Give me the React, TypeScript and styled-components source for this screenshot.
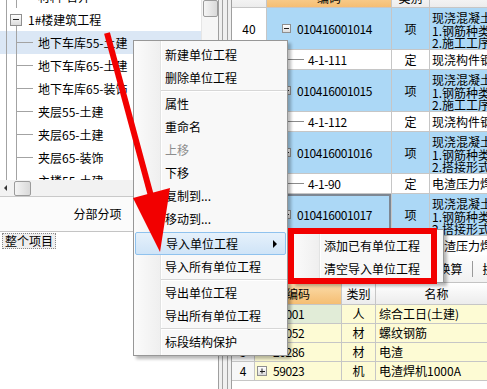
import React from "react";
import styled, { createGlobalStyle, css } from "styled-components";

const Global = createGlobalStyle`
  html, body { margin: 0; padding: 0; background: #fff; }
  body {
    font-family: "Noto Sans CJK SC", "Noto Sans", sans-serif;
    font-size: 12px;
    color: #000;
  }
  * { box-sizing: border-box; }
`;

const LINE = "#a3a3a3";
const GRID = "#c6c6c6";
const BLUE = "#acd8f6";

const Screen = styled.div`
  position: relative;
  width: 487px;
  height: 389px;
  overflow: hidden;
  display: grid;
  grid-template-columns: 218px 14px 1fr;
  background: #fff;
  line-height: 1;
`;

/* ---------------- left side ---------------- */
const LeftPanel = styled.div`
  display: flex;
  flex-direction: column;
  min-width: 0;
  overflow: hidden;
`;

const TreePane = styled.div`
  height: 180px;
  flex: none;
  display: grid;
  grid-template-columns: 1fr 17px;
  overflow: hidden;
`;

const TreeList = styled.div`
  display: flex;
  flex-direction: column;
  margin-top: -15px;
`;

const vline = (x: number) =>
  `linear-gradient(${LINE}, ${LINE}) ${x}px 0 / 1px 100% no-repeat`;

const TreeRow = styled.div<{ $level: number; $selected?: boolean }>`
  height: 23px;
  flex: none;
  display: flex;
  align-items: center;
  white-space: nowrap;
  background-color: ${(p) => (p.$selected ? "#dbe7f5" : "transparent")};
  ${(p) =>
    p.$level === 1
      ? css`
          padding-left: 38px;
          background-image: linear-gradient(${LINE}, ${LINE}),
            linear-gradient(${LINE}, ${LINE}),
            linear-gradient(${LINE}, ${LINE});
          background-position: 6px 0, 16px 0, 17px 11px;
          background-size: 1px 100%, 1px 100%, 16px 1px;
          background-repeat: no-repeat;
        `
      : css`
          padding-left: 10px;
          background: ${vline(6)}, linear-gradient(${LINE}, ${LINE}) 16px 17px / 1px 100% no-repeat;
        `}
`;

const ExpandBox = styled.span<{ $size?: number }>`
  flex: none;
  position: relative;
  width: ${(p) => p.$size ?? 12}px;
  height: ${(p) => p.$size ?? 12}px;
  border: 1px solid #8f8f8f;
  background: linear-gradient(#ffffff, #dcdcdc);
  display: inline-flex;
  align-items: center;
  justify-content: center;
  &::after {
    content: "";
    width: ${(p) => ((p.$size ?? 12) > 10 ? 6 : 5)}px;
    height: 1px;
    background: #222;
  }
`;

const PlusBox = styled(ExpandBox)`
  &::before {
    content: "";
    position: absolute;
    width: 1px;
    height: 5px;
    background: #222;
    left: 50%;
    top: 50%;
    transform: translate(-50%, -50%);
  }
`;

const RootLabel = styled.span`
  margin-left: 6px;
`;

const VScroll = styled.div`
  background: #f6f6f6;
  border-left: 1px solid #e6e6e6;
  padding: 0 0 0 1px;
`;

const Thumb = styled.div<{ $w: number; $h: number }>`
  width: ${(p) => p.$w}px;
  height: ${(p) => p.$h}px;
  border: 1px solid #9b9b9b;
  border-radius: 2px;
  background: linear-gradient(90deg, #f4f4f4, #d9d9d9);
`;

const HScroll = styled.div`
  height: 17px;
  flex: none;
  display: flex;
  align-items: center;
  gap: 7px;
  padding-left: 4px;
  background: #f2f2f2;
  border-bottom: 1px solid #c9c9c9;
`;

const ArrowLeft = styled.span`
  width: 0;
  height: 0;
  border-top: 3px solid transparent;
  border-bottom: 3px solid transparent;
  border-right: 3px solid #333;
`;

const SectionHeader = styled.div`
  height: 35px;
  flex: none;
  display: flex;
  align-items: center;
  justify-content: center;
  padding-right: 23px;
  border-bottom: 1px solid #c4c4c4;
  background: #fbfbfb;
  font-size: 12px;
`;

const NodeArea = styled.div`
  flex: 1;
  padding: 1px 0 0 2px;
`;

const NodeChip = styled.span`
  display: inline-flex;
  align-items: center;
  height: 16px;
  padding: 0 2px;
  border: 1px dotted #8a8a8a;
  background: #efefef;
`;

/* ---------------- splitter ---------------- */
const Splitter = styled.div`
  border-left: 1px solid #9f9f9f;
  border-right: 1px solid #9f9f9f;
  background: ${vline(3)}, ${vline(8)}, #f0f0f0;
`;

/* ---------------- right side ---------------- */
const RightPanel = styled.div`
  display: flex;
  flex-direction: column;
  min-width: 0;
  overflow: hidden;
`;

const TopViewport = styled.div`
  height: 255px;
  flex: none;
  overflow: hidden;
`;

const TopBody = styled.div`
  margin-top: -12px;
  display: flex;
  flex-direction: column;
`;

const TopRow = styled.div<{ $h: number }>`
  display: grid;
  grid-template-columns: 35px 125px 38px 140px;
  height: ${(p) => p.$h}px;
  flex: none;
`;

const Cell = styled.div<{ $bg?: string; $center?: boolean; $pl?: number }>`
  display: flex;
  align-items: center;
  justify-content: ${(p) => (p.$center ? "center" : "flex-start")};
  padding-left: ${(p) => p.$pl ?? 0}px;
  border-right: 1px solid ${GRID};
  border-bottom: 1px solid ${GRID};
  background: ${(p) => p.$bg ?? "#fff"};
  white-space: nowrap;
  overflow: hidden;
  min-width: 0;
  position: relative;
`;

const HeadCell = styled(Cell)<{ $orange?: boolean; $bottom?: boolean }>`
  align-items: ${(p) => (p.$bottom ? "flex-end" : "center")};
  padding-bottom: ${(p) => (p.$bottom ? 3 : 0)}px;
  background: ${(p) =>
    p.$orange
      ? "linear-gradient(#fbdcaa, #f5be73)"
      : "linear-gradient(#ffffff, #ececec)"};
`;

const SelectedCell = styled(Cell)`
  box-shadow: inset 0 0 0 2px #7d8793;
`;

const Code = styled.span<{ $ml?: number }>`
  letter-spacing: -0.4px;
  margin-left: ${(p) => p.$ml ?? 0}px;
`;

const SubLine = styled.span`
  width: 16px;
  height: 1px;
  background: #8a8a8a;
  margin: 0 4px 0 21px;
  flex: none;
`;

const NameStack = styled.div`
  display: flex;
  flex-direction: column;
  align-self: flex-start;
  padding: 2px 0 0 2px;
`;

const NameLine = styled.span<{ $h: number; $pl?: number }>`
  height: ${(p) => p.$h}px;
  line-height: ${(p) => p.$h}px;
  padding-left: ${(p) => p.$pl ?? 0}px;
`;

const Toolbar = styled.div`
  height: 28px;
  flex: none;
  display: flex;
  align-items: center;
  padding-left: 25px;
  background: linear-gradient(#fdfdfd, #f1f1f1);
  border-bottom: 1px solid #c3c3c3;
  white-space: nowrap;
`;

const ToolButton = styled.span`
  padding: 0 9.5px;
  flex: none;
`;

const ToolSep = styled.span`
  width: 1px;
  height: 16px;
  background: #9a9a9a;
  flex: none;
`;

const BottomGrid = styled.div`
  display: flex;
  flex-direction: column;
`;

const BottomRow = styled.div<{ $h: number }>`
  display: grid;
  grid-template-columns: 23px 87px 34px 122px;
  height: ${(p) => p.$h}px;
  flex: none;
`;

/* ---------------- overlays ---------------- */
const Menu = styled.div`
  position: absolute;
  left: 133px;
  top: 40px;
  width: 155px;
  padding: 2px 0 2px;
  border: 1px solid #979797;
  background: linear-gradient(90deg, #fbfbfb 0, #efefef 26px, #e2e3e3 26px, #e2e3e3 27px, #fff 27px, #fff 28px, #f8f8f8 28px);
  box-shadow: 3px 3px 3px rgba(0, 0, 0, 0.28);
  z-index: 5;
`;

const MenuItem = styled.div<{ $disabled?: boolean; $active?: boolean; $gap?: number }>`
  height: 23px;
  display: flex;
  align-items: center;
  padding-left: 31px;
  padding-right: 8px;
  margin: ${(p) => p.$gap ?? 0}px 0 0 0;
  color: ${(p) => (p.$disabled ? "#8d8d8d" : "#000")};
  white-space: nowrap;
  ${(p) =>
    p.$active &&
    css`
      margin-left: 1px;
      margin-right: 1px;
      padding-left: 30px;
      border: 1px solid #8fc2ee;
      border-radius: 2px;
      background: linear-gradient(#e6f1fb, #cfe4f7);
    `}
`;

const SubArrow = styled.span`
  margin-left: auto;
  width: 0;
  height: 0;
  border-top: 4px solid transparent;
  border-bottom: 4px solid transparent;
  border-left: 4px solid #000;
`;

const MenuSep = styled.div`
  height: 3px;
  margin-left: 27px;
  display: flex;
  flex-direction: column;
  justify-content: center;
  &::before {
    content: "";
    height: 1px;
    background: #d7d7d7;
  }
  &::after {
    content: "";
    height: 1px;
    background: #fff;
  }
`;

const SubMenu = styled(Menu)`
  left: 292px;
  top: 229px;
  width: 152px;
  padding-top: 4px;
  z-index: 6;
`;

const RedBox = styled.div`
  position: absolute;
  left: 288px;
  top: 228px;
  width: 149px;
  height: 56px;
  border: 6px solid #f20000;
  z-index: 7;
  pointer-events: none;
`;

const ArrowLayer = styled.svg`
  position: absolute;
  left: 0;
  top: 0;
  z-index: 8;
  pointer-events: none;
`;

/* ---------------- data ---------------- */
const treeChildren = [
  "地下车库55-土建",
  "地下车库65-土建",
  "地下车库65-装饰",
  "夹层55-土建",
  "夹层65-土建",
  "夹层65-装饰",
  "主楼55-土建",
];

type TopItem = {
  kind: "item" | "sub";
  num?: string;
  code: string;
  type: string;
  name: string[];
  selected?: boolean;
};

const topRows: TopItem[] = [
  { kind: "item", num: "40", code: "010416001014", type: "项", name: ["现浇混凝土钢筋", "1.钢筋种类、规格", "2.施工工序"] },
  { kind: "sub", code: "4-1-111", type: "定", name: ["现浇构件钢筋"] },
  { kind: "item", num: "41", code: "010416001015", type: "项", name: ["现浇混凝土钢筋", "1.钢筋种类、规格", "2.施工工序"] },
  { kind: "sub", code: "4-1-112", type: "定", name: ["现浇构件钢筋"] },
  { kind: "item", num: "42", code: "010416001016", type: "项", name: ["现浇混凝土钢筋", "1.钢筋种类、规格", "2.搭接形式"] },
  { kind: "sub", code: "4-1-90", type: "定", name: ["电渣压力焊"] },
  { kind: "item", num: "43", code: "010416001017", type: "项", name: ["现浇混凝土钢筋", "1.钢筋种类、规格", "2.搭接形式"], selected: true },
  { kind: "sub", code: "4-1-90", type: "定", name: ["电渣压力焊"] },
];

const bottomRows = [
  { num: "1", code: "10001", type: "人", name: "综合工日(土建)", green: true },
  { num: "2", code: "10052", type: "材", name: "螺纹钢筋" },
  { num: "3", code: "20286", type: "材", name: "电渣" },
  { num: "4", code: "59023", type: "机", name: "电渣焊机1000A", plus: true },
];

const YELLOW = "#fdfbd4";

type MenuEntry = { label?: string; sep?: boolean; disabled?: boolean; active?: boolean; sub?: boolean; gap?: number };

const menuEntries: MenuEntry[] = [
  { label: "新建单位工程" },
  { label: "删除单位工程" },
  { sep: true },
  { label: "属性" },
  { label: "重命名" },
  { label: "上移", disabled: true },
  { label: "下移" },
  { label: "复制到..." },
  { label: "移动到..." },
  { label: "导入单位工程", active: true, sub: true, gap: 2 },
  { label: "导入所有单位工程" },
  { sep: true },
  { label: "导出单位工程" },
  { label: "导出所有单位工程" },
  { sep: true },
  { label: "标段结构保护" },
];

export default function App() {
  return (
    <>
      <Global />
      <Screen>
        <LeftPanel>
          <TreePane>
            <TreeList>
              <TreeRow $level={1}>材料-合并</TreeRow>
              <TreeRow $level={0}>
                <ExpandBox />
                <RootLabel>1#楼建筑工程</RootLabel>
              </TreeRow>
              {treeChildren.map((t, i) => (
                <TreeRow key={t} $level={1} $selected={i === 0}>
                  {t}
                </TreeRow>
              ))}
            </TreeList>
            <VScroll>
              <Thumb $w={15} $h={17} />
            </VScroll>
          </TreePane>
          <HScroll>
            <ArrowLeft />
            <Thumb $w={17} $h={15} />
          </HScroll>
          <SectionHeader>分部分项</SectionHeader>
          <NodeArea>
            <NodeChip>整个项目</NodeChip>
          </NodeArea>
        </LeftPanel>

        <Splitter />

        <RightPanel>
          <TopViewport>
            <TopBody>
              <TopRow $h={20}>
                <HeadCell $bottom />
                <HeadCell $bottom $orange $center>编码</HeadCell>
                <HeadCell $bottom $center>类别</HeadCell>
                <HeadCell $bottom $center>名称</HeadCell>
              </TopRow>
              {topRows.map((r, i) => {
                const isItem = r.kind === "item";
                const h = isItem ? 42 : 20;
                const CodeCell = r.selected ? SelectedCell : Cell;
                return (
                  <TopRow key={i} $h={h}>
                    <Cell $center>{r.num}</Cell>
                    <CodeCell $bg={isItem ? BLUE : "#fff"} $pl={isItem ? 15 : 0}>
                      {isItem ? (
                        <>
                          <ExpandBox $size={9} />
                          <Code $ml={6}>{r.code}</Code>
                        </>
                      ) : (
                        <>
                          <SubLine />
                          <Code>{r.code}</Code>
                        </>
                      )}
                    </CodeCell>
                    <Cell $bg={isItem ? BLUE : "#fff"} $center>
                      {r.type}
                    </Cell>
                    <Cell $bg={isItem ? BLUE : "#fff"}>
                      {isItem ? (
                        <NameStack>
                          <NameLine $h={15}>{r.name[0]}</NameLine>
                          <NameLine $h={12}>{r.name[1]}</NameLine>
                          <NameLine $h={11}>{r.name[2]}</NameLine>
                        </NameStack>
                      ) : (
                        <NameLine $h={18} $pl={2}>{r.name[0]}</NameLine>
                      )}
                    </Cell>
                  </TopRow>
                );
              })}
            </TopBody>
          </TopViewport>

          <Toolbar>
            <ToolButton>工料机显示</ToolButton>
            <ToolSep />
            <ToolButton>单价构成</ToolButton>
            <ToolSep />
            <ToolButton>标准换算</ToolButton>
            <ToolSep />
            <ToolButton>换算信息</ToolButton>
          </Toolbar>

          <BottomGrid>
            <BottomRow $h={22}>
              <HeadCell />
              <HeadCell $orange $center>编码</HeadCell>
              <HeadCell $center>类别</HeadCell>
              <HeadCell $center>名称</HeadCell>
            </BottomRow>
            {bottomRows.map((r) => (
              <BottomRow key={r.num} $h={19}>
                <Cell $center $bg="#f7f7f7">{r.num}</Cell>
                <Cell $bg={r.green ? "#e1ecd7" : YELLOW} $pl={r.plus ? 2 : 18}>
                  {r.plus && <PlusBox $size={10} />}
                  <Code $ml={r.plus ? 6 : 0}>{r.code}</Code>
                </Cell>
                <Cell $bg={YELLOW} $center>{r.type}</Cell>
                <Cell $bg={YELLOW} $pl={3}>{r.name}</Cell>
              </BottomRow>
            ))}
          </BottomGrid>
        </RightPanel>

        <Menu>
          {menuEntries.map((m, i) =>
            m.sep ? (
              <MenuSep key={i} />
            ) : (
              <MenuItem key={i} $disabled={m.disabled} $active={m.active} $gap={m.gap}>
                {m.label}
                {m.sub && <SubArrow />}
              </MenuItem>
            )
          )}
        </Menu>

        <SubMenu>
          <MenuItem>添加已有单位工程</MenuItem>
          <MenuItem>清空导入单位工程</MenuItem>
        </SubMenu>

        <RedBox />

        <ArrowLayer width={487} height={389} viewBox="0 0 487 389">
          <line x1={107} y1={33} x2={151} y2={196} stroke="#f20000" strokeWidth={6} />
          <polygon points="133,198 170,188 160,252" fill="#f20000" />
        </ArrowLayer>
      </Screen>
    </>
  );
}
